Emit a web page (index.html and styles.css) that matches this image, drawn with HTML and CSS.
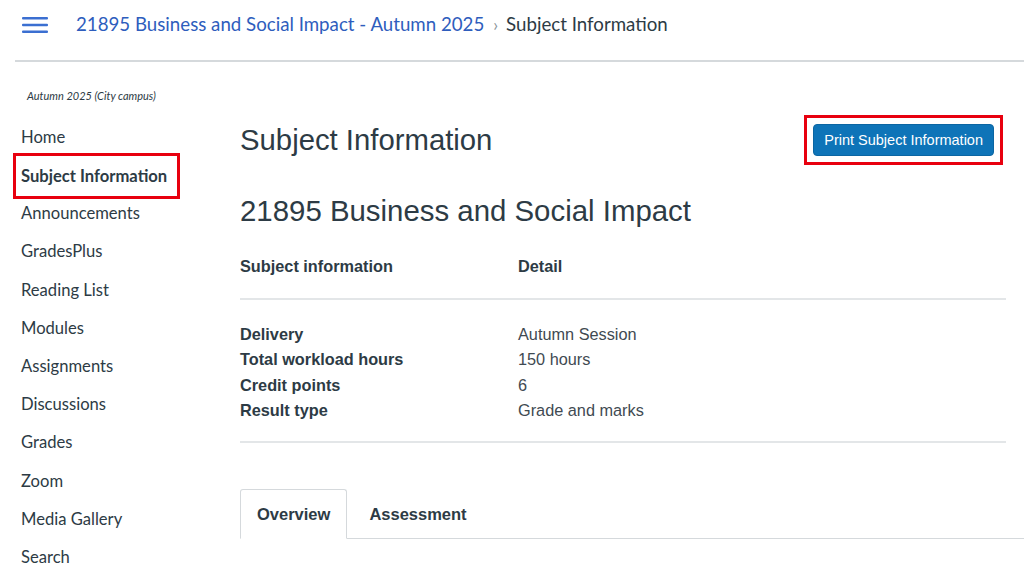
FILE: index.html
```html
<!DOCTYPE html>
<html lang="en">
<head>
  <meta charset="UTF-8" />
  <title>Subject Information</title>
  <link rel="stylesheet" href="styles.css">
</head>
<body>
  <div class="header">
    <div class="burger">
      <svg width="26" height="18" viewBox="0 0 26 18">
        <rect x="0" y="1" width="26" height="2.4" rx="1" fill="#3b6fd1" />
        <rect x="0" y="7.8" width="26" height="2.4" rx="1" fill="#3b6fd1" />
        <rect x="0" y="14.6" width="26" height="2.4" rx="1" fill="#3b6fd1" />
      </svg>
    </div>
    <div class="crumbs">
      <a class="crumb-link">21895 Business and Social Impact - Autumn 2025</a>
      <span class="crumb-sep">›</span>
      <span class="crumb-current">Subject Information</span>
    </div>
  </div>

  <div class="layout">
    <div class="sidebar">
      <div class="term">Autumn 2025 (City campus)</div>
      <ul class="nav">
        <li>Home</li>
        <li class="active">Subject Information</li>
        <li>Announcements</li>
        <li>GradesPlus</li>
        <li>Reading List</li>
        <li>Modules</li>
        <li>Assignments</li>
        <li>Discussions</li>
        <li>Grades</li>
        <li>Zoom</li>
        <li>Media Gallery</li>
        <li>Search</li>
      </ul>
    </div>

    <div class="main">
      <div class="title-row">
        <h1>Subject Information</h1>
        <div class="print-box">
          <button class="print-btn">Print Subject Information</button>
        </div>
      </div>

      <h2>21895 Business and Social Impact</h2>

      <div class="info-table">
        <div class="info-head">
          <div class="col-label">Subject information</div>
          <div class="col-value">Detail</div>
        </div>
        <div class="info-body">
          <div class="info-row"><div class="col-label">Delivery</div><div class="col-value">Autumn Session</div></div>
          <div class="info-row"><div class="col-label">Total workload hours</div><div class="col-value">150 hours</div></div>
          <div class="info-row"><div class="col-label">Credit points</div><div class="col-value">6</div></div>
          <div class="info-row"><div class="col-label">Result type</div><div class="col-value">Grade and marks</div></div>
        </div>
      </div>

      <div class="tabs">
        <div class="tab selected">Overview</div>
        <div class="tab">Assessment</div>
      </div>
    </div>
  </div>
</body>
</html>
```

FILE: styles.css
```css
body {
  margin: 0;
  background: #fff;
  font-family: Lato, "Liberation Sans", sans-serif;
  color: #2d3b45;
}
.header {
  display: flex;
  align-items: center;
  height: 60px;
  margin-left: 15px;
  border-bottom: 2px solid #d5d9dc;
}
.burger {
  width: 26px;
  margin-left: 7px;
  margin-right: 28px;
  display: flex;
  align-items: center;
  margin-top: -10px;
}
.crumbs {
  font-size: 18.7px;
  margin-top: -12px;
  display: flex;
  align-items: center;
}
.crumb-link {
  color: #2e5dbd;
}
.crumb-sep {
  color: #8a949b;
  margin: 0 8px 0 9px;
  font-size: 17px;
}
.crumb-current {
  color: #2d3b45;
}
.layout {
  display: flex;
}
.sidebar {
  width: 225px;
  flex-shrink: 0;
  padding-top: 27px;
}
.term {
  font-size: 11px;
  font-style: italic;
  color: #2d3b45;
  margin-left: 27px;
  margin-bottom: 16px;
}
.nav {
  list-style: none;
  margin: 0;
  padding: 0;
}
.nav li {
  font-size: 16.6px;
  height: 38.2px;
  line-height: 38.2px;
  padding-left: 21px;
  color: #2d3b45;
}
.nav li.active {
  font-weight: bold;
  margin-left: 13px;
  padding-left: 5px;
  width: 156px;
  height: 40px;
  line-height: 40px;
  border: 3px solid #e8000f;
  margin-top: -3px;
  margin-bottom: -5px;
}
.main {
  margin-left: 15px;
  width: 766px;
  font-family: "Liberation Sans", Arial, sans-serif;
}
.title-row {
  display: flex;
  justify-content: space-between;
  align-items: center;
  margin-top: 53px;
}
h1 {
  margin: 0;
  font-size: 29.3px;
  font-weight: normal;
  color: #2d3b45;
}
.print-box {
  border: 3px solid #e8000f;
  padding: 6px 6px;
  margin-right: 3px;
}
.print-btn {
  background: #0e74b8;
  color: #fff;
  border: 1px solid #0b66a3;
  border-radius: 4px;
  font-family: "Liberation Sans", Arial, sans-serif;
  font-size: 14.5px;
  padding: 6px 10px;
  height: 32px;
}
h2 {
  margin: 29px 0 0;
  font-size: 29.4px;
  font-weight: normal;
  color: #2d3b45;
}
.info-table {
  margin-top: 29px;
  font-size: 16.3px;
}
.info-head {
  display: flex;
  font-weight: bold;
  padding-bottom: 22px;
  border-bottom: 2px solid #e3e6e8;
}
.info-body {
  padding-top: 22px;
  padding-bottom: 18px;
  border-bottom: 2px solid #e3e6e8;
}
.info-row {
  display: flex;
  height: 25.3px;
  line-height: 25.3px;
}
.info-row .col-label {
  font-weight: bold;
}
.col-label {
  width: 278px;
}
.info-row .col-value {
  color: #3f4a52;
}
.tabs {
  display: flex;
  margin-top: 46px;
  border-bottom: 1px solid #d5d9dc;
  margin-right: -30px;
}
.tab {
  font-size: 16.5px;
  font-weight: bold;
  padding: 15px 17px 14px;
  margin-bottom: -1px;
  border: 1px solid transparent;
  border-radius: 3px 3px 0 0;
}
.tab.selected {
  border-color: #d5d9dc;
  border-bottom-color: #fff;
  padding: 15px 16px 14px;
}
.tab + .tab {
  padding-left: 21px;
}
```
